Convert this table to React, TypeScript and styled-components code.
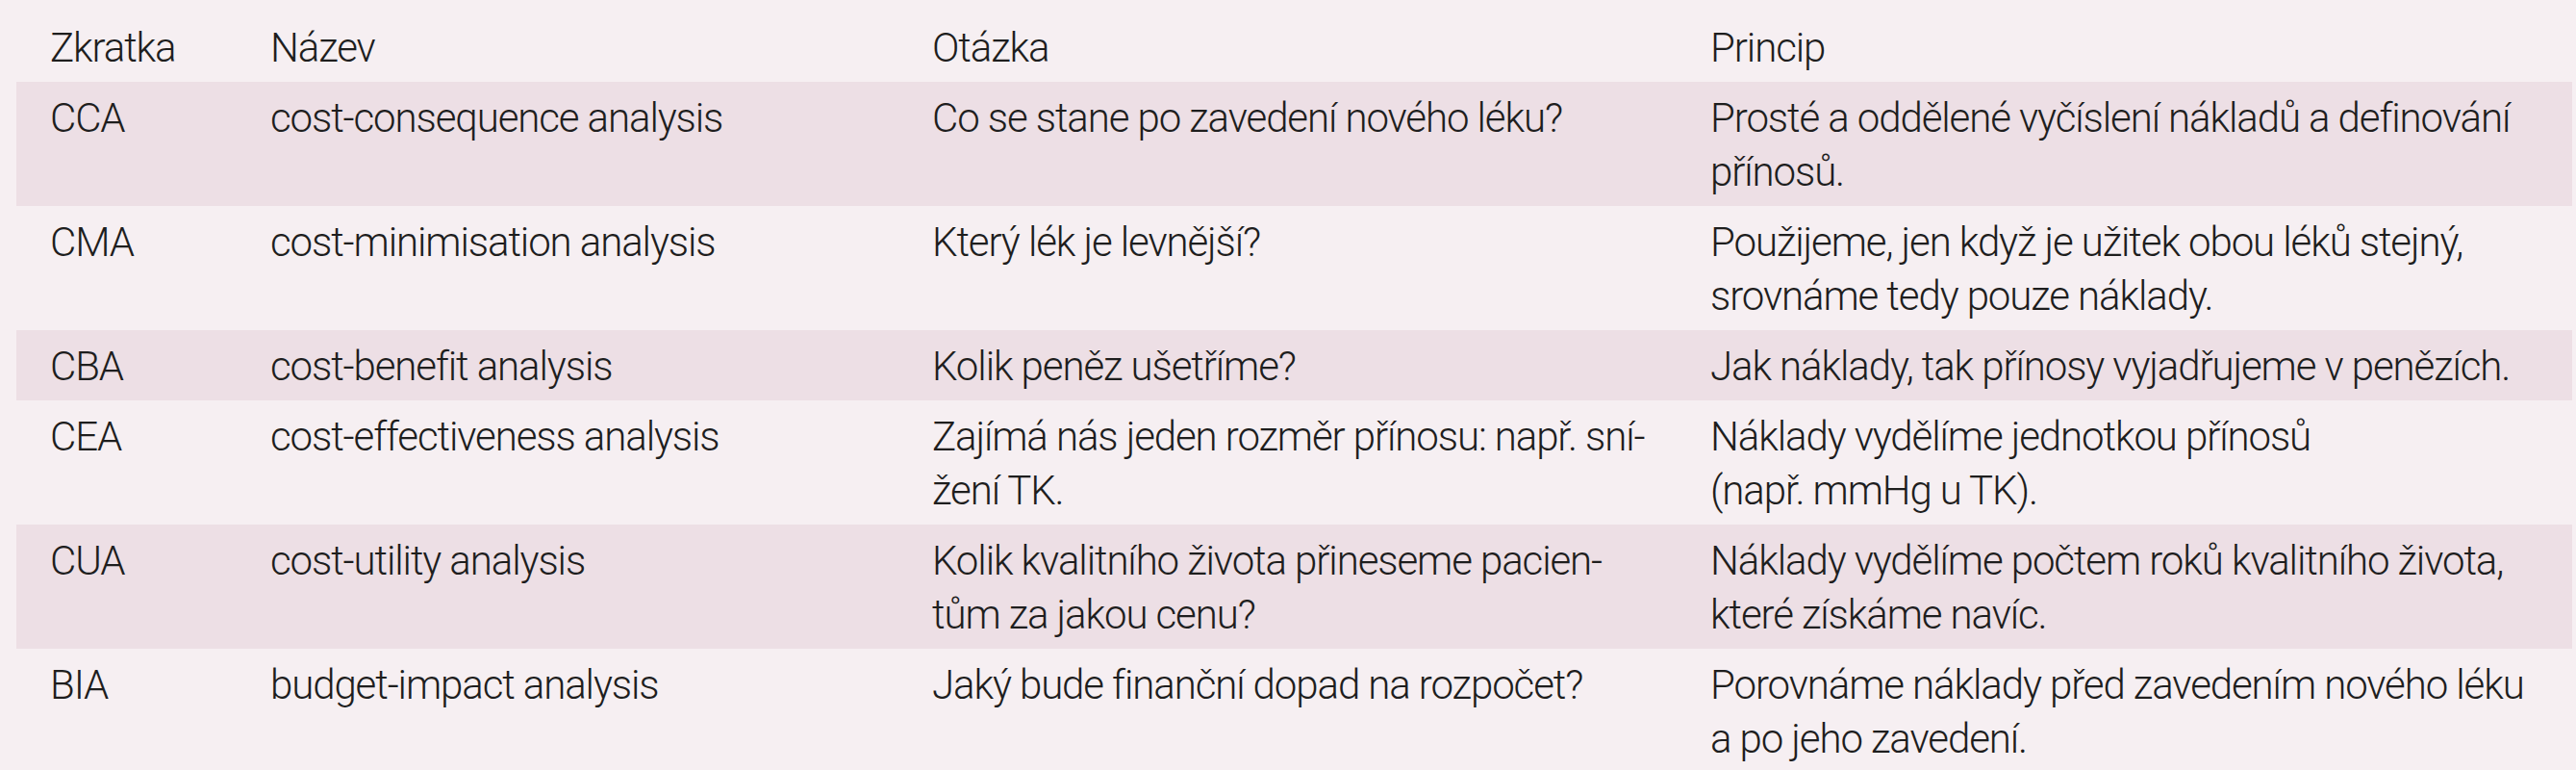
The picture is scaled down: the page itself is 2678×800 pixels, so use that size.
import React from "react";
import styled, { createGlobalStyle } from "styled-components";

const GlobalStyle = createGlobalStyle`
  html, body {
    margin: 0;
    padding: 0;
    background: #f6eff2;
  }
  body {
    font-family: Roboto, "Liberation Sans", Arial, sans-serif;
    color: #1e1e1e;
  }
`;

const Table = styled.div`
  margin-left: 17px;
  width: 2657px;
  display: flex;
  flex-direction: column;
`;

const Row = styled.div<{ $striped?: boolean; $header?: boolean }>`
  display: grid;
  grid-template-columns: 229px 688px 809px 931px;
  background: ${(p) => (p.$striped ? "#eddfe5" : "transparent")};
  padding: ${(p) => (p.$header ? "22px 0 7px" : "10px 0 7px")};
`;

const Cell = styled.div`
  padding-left: 35px;
  font-size: 42px;
  font-weight: 300;
  line-height: 56px;
  letter-spacing: -1.1px;
  white-space: nowrap;
`;

type Item = {
  code: string;
  name: string;
  question: React.ReactNode;
  principle: React.ReactNode;
};

const rows: Item[] = [
  {
    code: "CCA",
    name: "cost-consequence analysis",
    question: "Co se stane po zavedení nového léku?",
    principle: (
      <>
        Prosté a oddělené vyčíslení nákladů a definování
        <br />
        přínosů.
      </>
    ),
  },
  {
    code: "CMA",
    name: "cost-minimisation analysis",
    question: "Který lék je levnější?",
    principle: (
      <>
        Použijeme, jen když je užitek obou léků stejný,
        <br />
        srovnáme tedy pouze náklady.
      </>
    ),
  },
  {
    code: "CBA",
    name: "cost-benefit analysis",
    question: "Kolik peněz ušetříme?",
    principle: "Jak náklady, tak přínosy vyjadřujeme v penězích.",
  },
  {
    code: "CEA",
    name: "cost-effectiveness analysis",
    question: (
      <>
        Zajímá nás jeden rozměr přínosu: např. sní-
        <br />
        žení TK.
      </>
    ),
    principle: (
      <>
        Náklady vydělíme jednotkou přínosů
        <br />
        (např. mmHg u TK).
      </>
    ),
  },
  {
    code: "CUA",
    name: "cost-utility analysis",
    question: (
      <>
        Kolik kvalitního života přineseme pacien-
        <br />
        tům za jakou cenu?
      </>
    ),
    principle: (
      <>
        Náklady vydělíme počtem roků kvalitního života,
        <br />
        které získáme navíc.
      </>
    ),
  },
  {
    code: "BIA",
    name: "budget-impact analysis",
    question: "Jaký bude finanční dopad na rozpočet?",
    principle: (
      <>
        Porovnáme náklady před zavedením nového léku
        <br />a po jeho zavedení.
      </>
    ),
  },
];

export default function App() {
  return (
    <>
      <GlobalStyle />
      <Table>
        <Row $header>
          <Cell>Zkratka</Cell>
          <Cell>Název</Cell>
          <Cell>Otázka</Cell>
          <Cell>Princip</Cell>
        </Row>
        {rows.map((r, i) => (
          <Row key={r.code} $striped={i % 2 === 0}>
            <Cell>{r.code}</Cell>
            <Cell>{r.name}</Cell>
            <Cell>{r.question}</Cell>
            <Cell>{r.principle}</Cell>
          </Row>
        ))}
      </Table>
    </>
  );
}
